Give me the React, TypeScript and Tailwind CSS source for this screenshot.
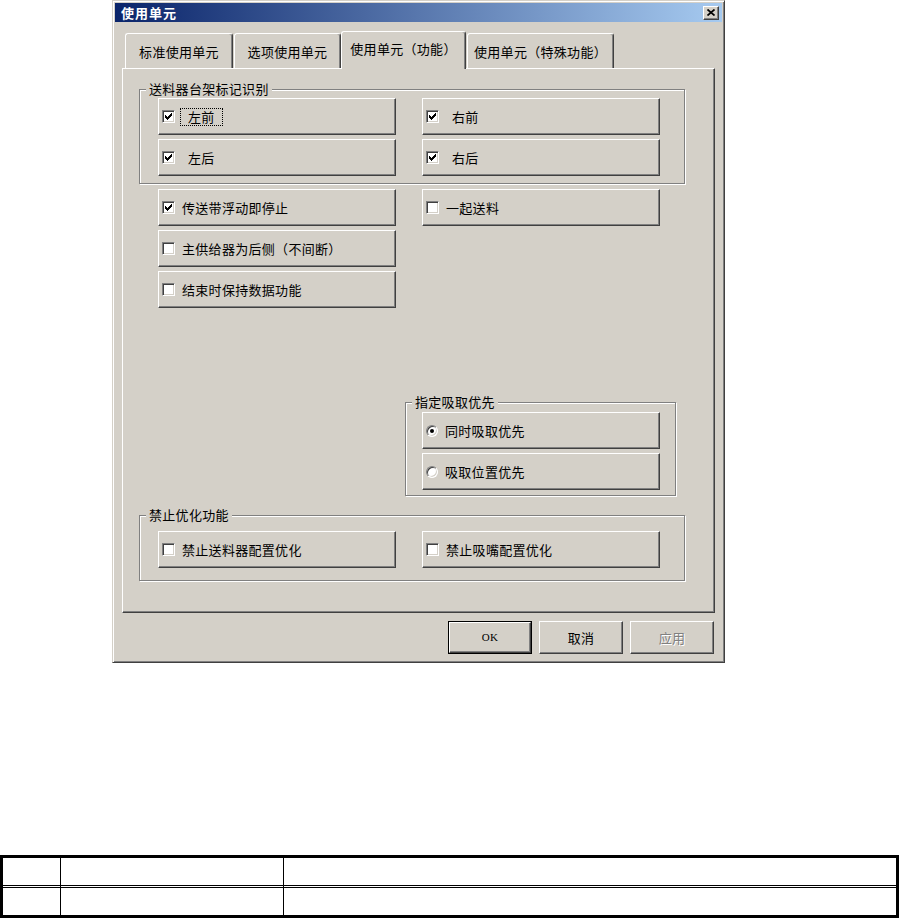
import React from 'react';

const raised =
  'border border-t-white border-l-white border-r-[#404040] border-b-[#404040] shadow-[inset_-1px_-1px_0_#808080]';

type Opt = { label: string; checked?: boolean; focus?: boolean; spaced?: boolean };

function CheckMark() {
  const cells: [number, number, number][] = [
    [6, 0, 1],
    [5, 1, 2],
    [0, 2, 1],
    [4, 2, 3],
    [0, 3, 2],
    [3, 3, 3],
    [0, 4, 5],
    [1, 5, 3],
    [2, 6, 1],
  ];
  return (
    <svg width="7" height="7" viewBox="0 0 7 7" shapeRendering="crispEdges">
      {cells.map(([x, y, w]) => (
        <rect key={`${x}-${y}`} x={x} y={y} width={w} height={1} fill="#000" />
      ))}
    </svg>
  );
}

function Box({ checked }: { checked?: boolean }) {
  return (
    <span className="flex h-[13px] w-[13px] shrink-0 items-center justify-center border border-t-[#808080] border-l-[#808080] border-r-white border-b-white bg-white shadow-[inset_1px_1px_0_#404040,inset_-1px_-1px_0_#d4d0c8]">
      {checked && <CheckMark />}
    </span>
  );
}

function Radio({ checked }: { checked?: boolean }) {
  return (
    <span className="flex h-[12px] w-[12px] shrink-0 items-center justify-center rounded-full border border-t-[#808080] border-l-[#808080] border-r-white border-b-white bg-white shadow-[inset_1px_1px_0_#404040,inset_-1px_-1px_0_#d4d0c8]">
      {checked && <span className="h-[4px] w-[4px] rounded-full bg-black" />}
    </span>
  );
}

function OptionButton({ opt, radio }: { opt: Opt; radio?: boolean }) {
  return (
    <div className={`flex h-[37px] w-[238px] items-center bg-[#d4d0c8] pl-[3px] ${raised}`}>
      {radio ? <Radio checked={opt.checked} /> : <Box checked={opt.checked} />}
      {opt.spaced ? (
        <span
          className={`ml-[5px] border px-[7px] leading-[16px] ${
            opt.focus ? 'border-dotted border-black' : 'border-transparent'
          }`}
        >
          {opt.label}
        </span>
      ) : (
        <span className="ml-[7px] leading-[16px]">{opt.label}</span>
      )}
    </div>
  );
}

function GroupBox({
  title,
  className,
  children,
}: {
  title: string;
  className: string;
  children: React.ReactNode;
}) {
  return (
    <div
      className={`relative box-border border border-[#808080] shadow-[inset_1px_1px_0_#fff,1px_1px_0_#fff] ${className}`}
    >
      <span className="absolute -top-[9px] left-[6px] bg-[#d4d0c8] px-[3px] leading-[16px]">
        {title}
      </span>
      {children}
    </div>
  );
}

const trayOpts: Opt[] = [
  { label: '左前', checked: true, focus: true, spaced: true },
  { label: '右前', checked: true, spaced: true },
  { label: '左后', checked: true, spaced: true },
  { label: '右后', checked: true, spaced: true },
];

const tabs = [
  { label: '标准使用单元', cls: 'ml-[3px] w-[108px]' },
  { label: '选项使用单元', cls: 'ml-[1px] w-[107px]' },
  { label: '使用单元（功能）', cls: 'w-[125px]', active: true },
  { label: '使用单元（特殊功能）', cls: 'ml-[1px] w-[147px]' },
];

function Dialog() {
  return (
    <div className="ml-[112px] box-border flex h-[663px] w-[613px] flex-col border border-t-[#d4d0c8] border-l-[#d4d0c8] border-r-[#404040] border-b-[#404040] bg-[#d4d0c8] p-[2px] shadow-[inset_1px_1px_0_#fff,inset_-1px_-1px_0_#808080]">
      {/* caption */}
      <div className="flex h-[19px] items-center justify-between bg-[linear-gradient(to_right,#0a246a,#a6caf0)] pl-[6px] pr-[3px]">
        <span className="text-[13px] font-bold leading-[16px] tracking-[1px] text-white">使用单元</span>
        <span className={`flex h-[14px] w-[16px] items-center justify-center bg-[#d4d0c8] ${raised}`}>
          <svg width="8" height="7" viewBox="0 0 8 7">
            <path d="M0.5 0.5 L7.5 6.5 M7.5 0.5 L0.5 6.5" stroke="#000" strokeWidth="1.7" />
          </svg>
        </span>
      </div>

      {/* tabs */}
      <div className="flex h-[46px] items-end pl-[7px]">
        {tabs.map((t) =>
          t.active ? (
            <div
              key={t.label}
              className={`relative z-10 -mb-[1px] flex h-[38px] items-center justify-center rounded-t-[3px] border-t border-l border-r border-t-white border-l-white border-r-[#404040] bg-[#d4d0c8] pb-[3px] shadow-[inset_-1px_0_0_#808080] ${t.cls}`}
            >
              {t.label}
            </div>
          ) : (
            <div
              key={t.label}
              className={`flex h-[35px] items-center justify-center rounded-t-[3px] border-t border-l border-r border-t-white border-l-white border-r-[#404040] pt-[1px] shadow-[inset_-1px_0_0_#808080] ${t.cls}`}
            >
              {t.label}
            </div>
          ),
        )}
      </div>

      {/* tab page */}
      <div className={`ml-[7px] box-border flex h-[545px] w-[593px] flex-col ${raised}`}>
        <GroupBox title="送料器台架标记识别" className="ml-[16px] mt-[20px] h-[95px] w-[546px] pl-[18px] pt-[8px]">
          <div className="grid grid-cols-[238px_238px] gap-x-[26px] gap-y-[4px]">
            {trayOpts.map((o) => (
              <OptionButton key={o.label} opt={o} />
            ))}
          </div>
        </GroupBox>

        <div className="ml-[35px] mt-[5px] grid grid-cols-[238px_238px] gap-x-[26px] gap-y-[4px]">
          <OptionButton opt={{ label: '传送带浮动即停止', checked: true }} />
          <OptionButton opt={{ label: '一起送料' }} />
          <OptionButton opt={{ label: '主供给器为后侧（不间断）' }} />
          <div />
          <OptionButton opt={{ label: '结束时保持数据功能' }} />
        </div>

        <GroupBox title="指定吸取优先" className="ml-[282px] mt-[94px] h-[94px] w-[271px] pl-[16px] pt-[9px]">
          <div className="flex flex-col gap-[4px]">
            <OptionButton radio opt={{ label: '同时吸取优先', checked: true }} />
            <OptionButton radio opt={{ label: '吸取位置优先' }} />
          </div>
        </GroupBox>

        <GroupBox title="禁止优化功能" className="ml-[16px] mt-[19px] h-[66px] w-[546px] pl-[18px] pt-[15px]">
          <div className="grid grid-cols-[238px_238px] gap-x-[26px]">
            <OptionButton opt={{ label: '禁止送料器配置优化' }} />
            <OptionButton opt={{ label: '禁止吸嘴配置优化' }} />
          </div>
        </GroupBox>
      </div>

      {/* command buttons */}
      <div className="mt-[8px] flex justify-end gap-[7px] pr-[8px]">
        <div className="h-[33px] w-[84px] border border-black">
          <div className={`flex h-full w-full items-center justify-center font-['Liberation_Serif',serif] text-[11px] ${raised}`}>
            OK
          </div>
        </div>
        <div className={`flex h-[33px] w-[84px] items-center justify-center ${raised}`}>取消</div>
        <div
          className={`flex h-[33px] w-[84px] items-center justify-center text-[#808080] [text-shadow:1px_1px_0_#fff] ${raised}`}
        >
          应用
        </div>
      </div>
    </div>
  );
}

function SpecTable() {
  const rowCls = ['h-[30px] border-b-[3px] border-double border-black', 'h-[27px]'];
  return (
    <div className="mt-[192px] grid grid-cols-[58px_223px_1fr] border-[3px] border-black">
      {rowCls.map((r, i) => (
        <React.Fragment key={i}>
          <div className={`${r} border-r border-r-black`} />
          <div className={`${r} border-r border-r-black`} />
          <div className={r} />
        </React.Fragment>
      ))}
    </div>
  );
}

export default function App() {
  return (
    <div className="h-[918px] w-[899px] bg-white font-['Noto_Sans_CJK_SC',sans-serif] text-[13px] tracking-[0.3px] text-black">
      <Dialog />
      <SpecTable />
    </div>
  );
}
